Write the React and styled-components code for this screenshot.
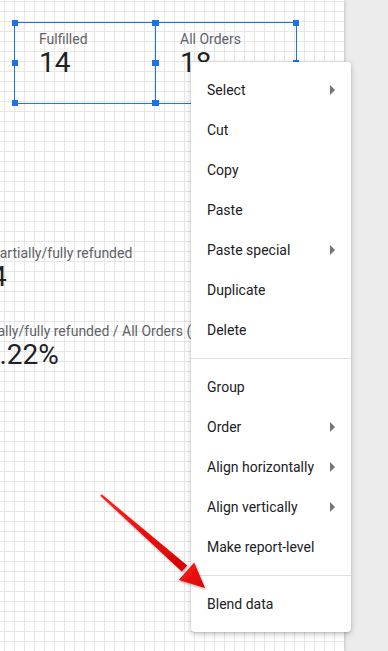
import React from 'react'
import styled, { createGlobalStyle } from 'styled-components'

const Global = createGlobalStyle`
  html, body {
    margin: 0;
    padding: 0;
    overflow: hidden;
    background: #ececec;
  }
  body {
    font-family: Roboto, "Liberation Sans", sans-serif;
  }
`

const Page = styled.div`
  display: flex;
  width: 388px;
  height: 651px;
  background: #ececec;
  position: relative;
  overflow: hidden;
`

const Canvas = styled.div`
  position: relative;
  width: 344px;
  height: 100%;
  flex-shrink: 0;
  overflow: hidden;
  background-color: #fff;
  background-image:
    linear-gradient(to right, #e6e6e6 1px, transparent 1px),
    linear-gradient(to bottom, #e6e6e6 1px, transparent 1px);
  background-size: 10px 10px;
  background-position: 4px 1px;
  box-shadow: 1px 0 3px rgba(0, 0, 0, 0.18);
`

const Card = styled.div`
  position: absolute;
  box-sizing: border-box;
  width: 142px;
  height: 82px;
  padding: 8px 24px;
  border: 1px solid ${p => (p.$selected ? '#1a73e8' : 'transparent')};
  white-space: nowrap;
`

const Label = styled.div`
  font-size: 14px;
  line-height: 16px;
  color: #5f6368;
`

const Value = styled.div`
  font-size: 28px;
  line-height: 32px;
  color: #202124;
`

const Handle = styled.span`
  position: absolute;
  width: 6px;
  height: 6px;
  background: #1a73e8;
  ${p => (p.$v === 'top' ? 'top: -3px;' : p.$v === 'bottom' ? 'bottom: -3px;' : 'top: calc(50% - 3px);')}
  ${p => (p.$h === 'left' ? 'left: -3px;' : 'right: -3px;')}
`

const Menu = styled.ul`
  position: absolute;
  left: 191px;
  top: 62px;
  width: 160px;
  margin: 0;
  padding: 8px 0;
  list-style: none;
  background: #fff;
  border-radius: 4px;
  box-shadow: 0 2px 6px rgba(0, 0, 0, 0.22), 0 1px 2px rgba(0, 0, 0, 0.12);
  z-index: 5;
`

const Item = styled.li`
  display: flex;
  align-items: center;
  justify-content: space-between;
  height: 40px;
  padding: 0 16px;
  font-size: 14px;
  color: #202124;
  white-space: nowrap;
`

const Divider = styled.li`
  height: 1px;
  margin: 8px 0;
  background: #e0e0e0;
`

const Arrow = styled.svg`
  width: 5px;
  height: 10px;
  fill: #757575;
  flex-shrink: 0;
`

const Pointer = styled.svg`
  position: absolute;
  left: 0;
  top: 0;
  width: 388px;
  height: 651px;
  pointer-events: none;
  z-index: 10;
`

const Handles = () => (
  <>
    {['top', 'mid', 'bottom'].flatMap(v =>
      ['left', 'right'].map(h => <Handle key={v + h} $v={v} $h={h} />)
    )}
  </>
)

const menu = [
  ['Select', true],
  ['Cut'],
  ['Copy'],
  ['Paste'],
  ['Paste special', true],
  ['Duplicate'],
  ['Delete'],
  '-',
  ['Group'],
  ['Order', true],
  ['Align horizontally', true],
  ['Align vertically', true],
  ['Make report-level'],
  '-',
  ['Blend data'],
]

const cards = [
  { x: 14, y: 22, label: 'Fulfilled', value: '14', selected: true },
  { x: 155, y: 22, label: 'All Orders', value: '18', selected: true },
  { x: -34, y: 236, label: 'Partially/fully refunded', value: '4' },
  { x: -57, y: 314, label: 'Partially/fully refunded / All Orders (%)', value: '22.22%' },
]

export default function App() {
  return (
    <Page>
      <Global />
      <Canvas>
        {cards.map(c => (
          <Card key={c.label} $selected={c.selected} style={{ left: c.x, top: c.y }}>
            <Label>{c.label}</Label>
            <Value>{c.value}</Value>
            {c.selected && <Handles />}
          </Card>
        ))}
      </Canvas>
      <Menu>
        {menu.map((m, i) =>
          m === '-' ? (
            <Divider key={i} />
          ) : (
            <Item key={m[0]}>
              <span>{m[0]}</span>
              {m[1] && (
                <Arrow viewBox="0 0 5 10">
                  <polygon points="0,0 5,5 0,10" />
                </Arrow>
              )}
            </Item>
          )
        )}
      </Menu>
      <Pointer viewBox="0 0 388 651">
        <defs>
          <linearGradient id="red" x1="0" y1="0" x2="1" y2="1">
            <stop offset="0" stopColor="#ff2020" />
            <stop offset="1" stopColor="#d60000" />
          </linearGradient>
          <filter id="sh" x="-20%" y="-20%" width="140%" height="140%">
            <feDropShadow dx="1" dy="1.5" stdDeviation="1.2" floodColor="#000" floodOpacity="0.3" />
          </filter>
        </defs>
        <g filter="url(#sh)" fill="url(#red)">
          <polygon points="100.3,495.7 101.7,494.3 187.2,565.6 181.8,571.6" />
          <polygon points="205,588 178.6,580 194.2,562.6" />
        </g>
      </Pointer>
    </Page>
  )
}
